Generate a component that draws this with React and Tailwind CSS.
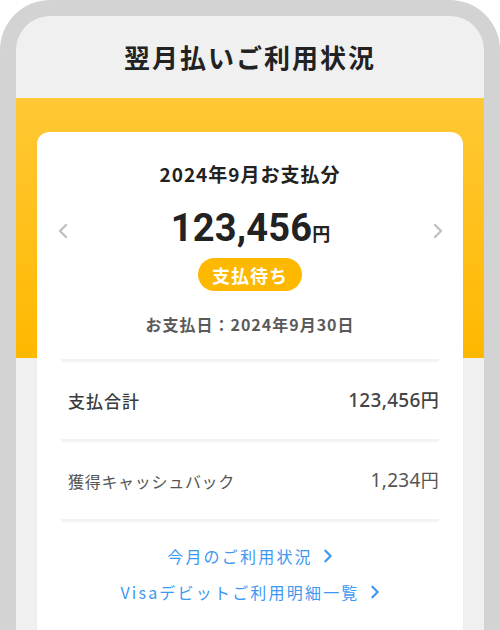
function Chevron({ className, dir = 'right', width = 2.6 }) {
  return (
    <svg viewBox="0 0 10 16" className={className} fill="none">
      <path
        d={dir === 'right' ? 'M2 2l6 6-6 6' : 'M8 2L2 8l6 6'}
        stroke="currentColor"
        strokeWidth={width}
        strokeLinecap="round"
        strokeLinejoin="round"
      />
    </svg>
  );
}

function Row({ label, value, strong }) {
  return (
    <div className="flex items-center justify-between h-[80px] pl-[7px] border-b-[3px] border-[#f3f3f3]">
      <span
        className={
          strong
            ? 'text-[17px] tracking-[1px] font-medium text-[#3a3a3a]'
            : 'text-[16px] tracking-[0.7px] text-[#555]'
        }
      >
        {label}
      </span>
      <span className={`tracking-[0.3px] ${strong ? 'font-medium text-[#444]' : 'text-[#555]'}`}>
        <span className="text-[19px] font-['Noto_Sans',sans-serif]">{value}</span>
        <span className="text-[18px]">円</span>
      </span>
    </div>
  );
}

export default function App() {
  return (
    <div className="w-[500px] h-[630px] bg-white font-['Noto_Sans_CJK_JP','Noto_Sans',sans-serif]">
      <div className="h-full bg-[#d3d3d3] rounded-t-[50px] pt-4 px-4">
        <div className="h-full flex flex-col bg-[#f0f0f0] rounded-t-[34px] overflow-hidden">
          {/* header */}
          <div className="h-[82px] flex items-center justify-center shrink-0">
            <h1 className="text-[26px] leading-[32px] font-bold text-[#222] tracking-[2px]">翌月払いご利用状況</h1>
          </div>

          {/* yellow band + card */}
          <div className="flex-1 flex flex-col px-[21px] pt-[34px] bg-no-repeat bg-[length:100%_260px] bg-[linear-gradient(to_bottom,#ffc835,#ffb800)]">
            <div className="flex-1 bg-white rounded-t-[12px] px-6 shadow-[0_0_1px_rgba(0,0,0,0.08)]">
              <div className="pt-[28px] text-center text-[19px] font-bold text-[#222] tracking-[1px] leading-[28px]">
                2024年9月お支払分
              </div>

              <div className="flex items-center justify-between h-[44px] mt-[21px]">
                <Chevron dir="left" className="w-[10px] h-[16px] text-[#c0c0c0] -ml-[3px]" width={2.4} />
                <div className="text-[#222] font-bold leading-[44px]">
                  <span className="text-[38px] font-['Roboto',sans-serif] tracking-[0.2px]">123,456</span>
                  <span className="text-[18px]">円</span>
                </div>
                <Chevron className="w-[10px] h-[16px] text-[#c0c0c0] -mr-[4px]" width={2.4} />
              </div>

              <div className="flex justify-center mt-[5px]">
                <span className="w-[104px] h-[33px] rounded-full bg-[#ffb800] text-white text-[18px] leading-[24px] font-bold flex items-center justify-center tracking-[1px]">
                  支払待ち
                </span>
              </div>

              <div className="text-center mt-[22px] text-[16px] font-bold text-[#5a5a5a] leading-[22px] tracking-[1px]">
                お支払日：2024年9月30日
              </div>

              <div className="mt-[24px] border-t-[3px] border-[#f3f3f3]">
                <Row label="支払合計" value="123,456" strong />
                <Row label="獲得キャッシュバック" value="1,234" />
              </div>

              <div className="flex flex-col items-center gap-[12px] pt-[22px] text-[16px] text-[#3d98f2] tracking-[2.2px] leading-[24px]">
                <a className="flex items-center gap-[10px]">
                  今月のご利用状況
                  <Chevron className="w-[10px] h-[14px]" />
                </a>
                <a className="flex items-center gap-[10px]">
                  Visaデビットご利用明細一覧
                  <Chevron className="w-[10px] h-[14px]" />
                </a>
              </div>
            </div>
          </div>
        </div>
      </div>
    </div>
  );
}
